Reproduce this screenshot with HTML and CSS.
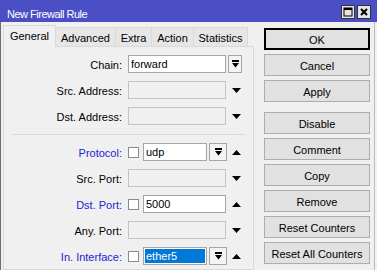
FILE: index.html
```html
<!DOCTYPE html>
<html>
<head>
<meta charset="utf-8">
<link rel="stylesheet" href="styles.css">
</head>
<body>
<div class="titlebar">
  <span class="title">New Firewall Rule</span>
  <div class="tb-btns">
    <span class="tb-btn"><svg width="10" height="10" viewBox="0 0 10 10"><rect x="1" y="1" width="8" height="8" fill="none" stroke="#000" stroke-width="1"/><rect x="1" y="1" width="8" height="2" fill="#000"/></svg></span>
    <span class="tb-btn"><svg width="10" height="10" viewBox="0 0 10 10"><path d="M2 2L8 8M8 2L2 8" stroke="#000" stroke-width="2"/></svg></span>
  </div>
</div>
<div class="content">
  <div class="left">
    <div class="tabs">
      <div class="tab active t-general">General</div>
      <div class="tab t-advanced">Advanced</div>
      <div class="tab t-extra">Extra</div>
      <div class="tab t-action">Action</div>
      <div class="tab t-stats">Statistics</div>
    </div>
    <div class="panel">
      <div class="row">
        <span class="lbl">Chain:</span>
        <span class="inp w-full">forward</span>
        <span class="dd dd-narrow"><svg width="7" height="8" viewBox="0 0 7 8"><rect x="0" y="0" width="7" height="2"/><path d="M0 3H7L3.5 7.5Z"/></svg></span>
      </div>
      <div class="row">
        <span class="lbl">Src. Address:</span>
        <span class="inp off w-full"></span>
        <span class="arrow"><svg width="9" height="5" viewBox="0 0 9 5"><path d="M0 0H9L4.5 5Z"/></svg></span>
      </div>
      <div class="row">
        <span class="lbl">Dst. Address:</span>
        <span class="inp off w-full"></span>
        <span class="arrow"><svg width="9" height="5" viewBox="0 0 9 5"><path d="M0 0H9L4.5 5Z"/></svg></span>
      </div>
      <div class="sep"></div>
      <div class="row">
        <span class="lbl blue">Protocol:</span>
        <span class="cb"></span>
        <span class="inp w-short">udp</span>
        <span class="dd dd-wide"><svg width="7" height="8" viewBox="0 0 7 8"><rect x="0" y="0" width="7" height="2"/><path d="M0 3H7L3.5 7.5Z"/></svg></span>
        <span class="arrow a-up"><svg width="9" height="5" viewBox="0 0 9 5"><path d="M0 5H9L4.5 0Z"/></svg></span>
      </div>
      <div class="row">
        <span class="lbl">Src. Port:</span>
        <span class="inp off w-full"></span>
        <span class="arrow"><svg width="9" height="5" viewBox="0 0 9 5"><path d="M0 0H9L4.5 5Z"/></svg></span>
      </div>
      <div class="row">
        <span class="lbl blue">Dst. Port:</span>
        <span class="cb"></span>
        <span class="inp w-mid">5000</span>
        <span class="arrow"><svg width="9" height="5" viewBox="0 0 9 5"><path d="M0 5H9L4.5 0Z"/></svg></span>
      </div>
      <div class="row">
        <span class="lbl">Any. Port:</span>
        <span class="inp off w-full"></span>
        <span class="arrow"><svg width="9" height="5" viewBox="0 0 9 5"><path d="M0 0H9L4.5 5Z"/></svg></span>
      </div>
      <div class="row">
        <span class="lbl blue">In. Interface:</span>
        <span class="cb"></span>
        <span class="inp w-short sel"><span class="selected">ether5</span></span>
        <span class="dd dd-wide"><svg width="7" height="8" viewBox="0 0 7 8"><rect x="0" y="0" width="7" height="2"/><path d="M0 3H7L3.5 7.5Z"/></svg></span>
        <span class="arrow a-up"><svg width="9" height="5" viewBox="0 0 9 5"><path d="M0 5H9L4.5 0Z"/></svg></span>
      </div>
    </div>
  </div>
  <div class="buttons">
    <div class="btn default">OK</div>
    <div class="btn">Cancel</div>
    <div class="btn">Apply</div>
    <div class="btn gap-before">Disable</div>
    <div class="btn">Comment</div>
    <div class="btn">Copy</div>
    <div class="btn">Remove</div>
    <div class="btn">Reset Counters</div>
    <div class="btn">Reset All Counters</div>
  </div>
</div>
</body>
</html>
```
FILE: styles.css
```css
* { box-sizing: border-box; margin: 0; padding: 0; }
html, body { width: 377px; height: 270px; overflow: hidden; }
body {
  background: #f0f0f0;
  font-family: "Liberation Sans", Arial, sans-serif;
  font-size: 11px;
  color: #000;
}
.titlebar {
  height: 22px;
  background: #4b4fc6;
  display: flex;
  justify-content: space-between;
}
.title {
  color: #fff;
  padding: 6px 0 0 7px;
  line-height: 16px;
  letter-spacing: -0.5px;
}
.tb-btns { display: flex; gap: 2px; padding: 5px 6px 0 0; }
.tb-btn {
  width: 14px; height: 14px;
  border: 1px solid #333;
  background: #e4e4e4;
  display: flex; align-items: center; justify-content: center;
}
.tb-btn svg { display: block; }
.content {
  display: flex;
  width: 375px;
  height: 248px;
  border-left: 1px solid #6e6e6e;
  border-right: 1px solid #bcbcbc;
  padding: 3px 4px 0 2px;
}
.left { width: 251px; display: flex; flex-direction: column; }
.tabs { display: flex; align-items: flex-end; height: 21px; }
.tab {
  height: 19px;
  border: 1px solid #d9d9d9;
  border-bottom: none;
  background: #e6e6e6;
  margin-left: -1px;
  text-align: center;
  padding-top: 2px;
  line-height: 16px;
  white-space: nowrap;
}
.tab.active {
  height: 22px;
  margin-left: 0;
  margin-bottom: -1px;
  background: #f0f0f0;
  position: relative;
  z-index: 1;
}
.t-general { width: 53px; }
.t-advanced { width: 61px; }
.t-extra { width: 37px; }
.t-action { width: 43px; }
.t-stats { width: 55px; }
.panel {
  flex: 1;
  border: 1px solid #d9d9d9;
  padding-top: 8px;
  display: flex;
  flex-direction: column;
  gap: 8px;
}
.row { display: flex; align-items: center; height: 18px; }
.lbl {
  width: 118px;
  margin-right: 6px;
  text-align: right;
  white-space: nowrap;
  padding-top: 1px;
}
.blue { color: #2323d4; }
.inp {
  height: 18px;
  border: 1px solid #a5a5a5;
  background: #fff;
  padding: 1px 0 0 2px;
  line-height: 15px;
  white-space: nowrap;
}
.inp.off { background: #f0f0f0; border-color: #c4c4c4; }
.w-full { width: 98px; }
.w-short { width: 64px; }
.w-mid { width: 83px; }
.inp.sel { padding: 1px; }
.selected {
  display: block;
  height: 14px;
  background: #0078d7;
  color: #fff;
  padding-left: 1px;
  line-height: 14px;
}
.cb {
  width: 11px; height: 11px;
  border: 1px solid #8a8a8a;
  background: #fff;
  margin-right: 4px;
}
.dd {
  height: 18px;
  border: 1px solid #a5a5a5;
  background: #f4f4f4;
  display: flex; align-items: center; justify-content: center;
}
.dd svg { display: block; fill: #000; }
.dd-narrow { width: 14px; margin-left: 2px; }
.dd-wide { width: 18px; margin-left: 2px; }
.arrow { margin-left: 6px; display: flex; }
.dd-wide + .arrow { margin-left: 5px; }
.arrow svg { display: block; fill: #000; }
.sep {
  height: 1px;
  margin: 1px 8px 0 8px;
  background: #d9d9d9;
}
.buttons {
  width: 106px;
  margin-left: 10px;
  padding-top: 3px;
  display: flex;
  flex-direction: column;
  gap: 4px;
}
.btn {
  height: 22px;
  border: 1px solid #adadad;
  background: #e1e1e1;
  text-align: center;
  line-height: 18px;
  padding-top: 2px;
  white-space: nowrap;
}
.btn.default { border-color: #000; box-shadow: inset 0 0 0 1px #000; }
.gap-before { margin-top: 6px; }
```
